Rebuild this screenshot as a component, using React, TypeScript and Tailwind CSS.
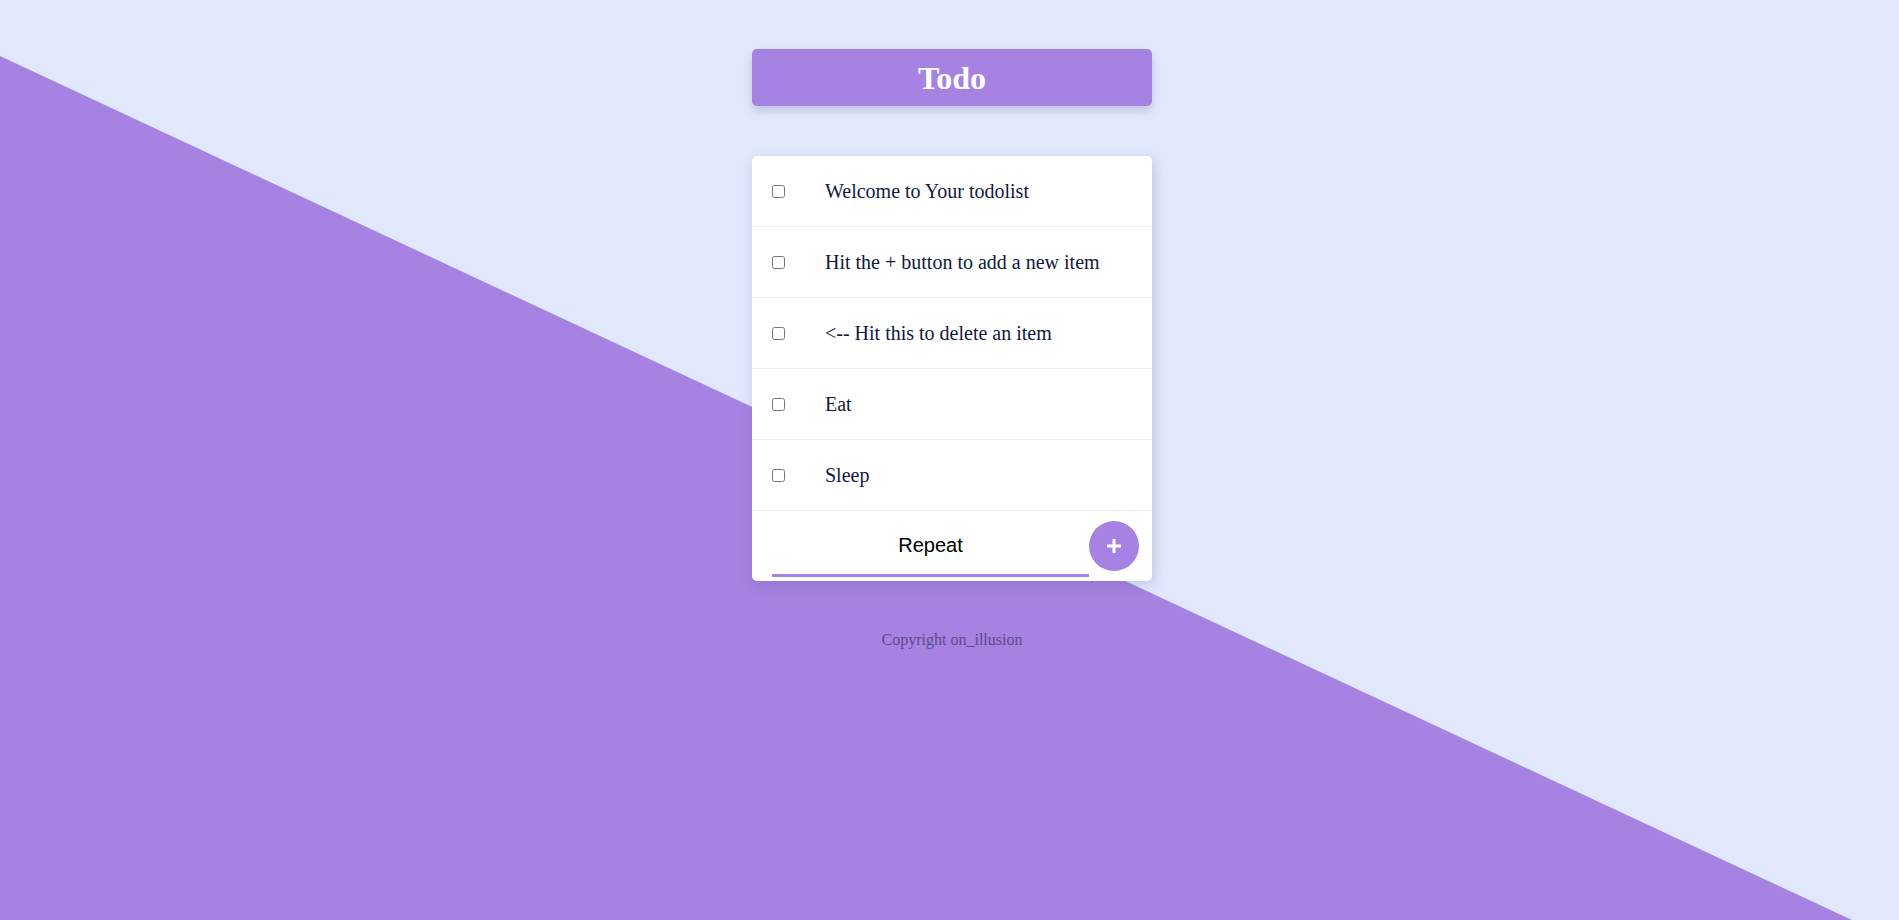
import { useState } from "react"

const items = [
  "Welcome to Your todolist",
  "Hit the + button to add a new item",
  "<-- Hit this to delete an item",
  "Eat",
  "Sleep",
]

export default function App() {
  const [value, setValue] = useState("Repeat")

  return (
    <div className="relative h-screen w-full overflow-hidden bg-[#e2e8fc] font-['Liberation_Serif',serif]">
      {/* fondo diagonal */}
      <div className="absolute inset-0 bg-[#a683e2] [clip-path:polygon(0_56px,1852px_100%,0_100%)]" />

      <div className="relative z-10 flex flex-col items-center pl-[5px] pt-[49px]">
        <div className="flex h-[57px] w-[400px] items-center justify-center rounded-[5px] bg-[#a683e2] shadow-[0_5px_10px_rgba(60,60,120,0.2)]">
          <h1 className="text-[32px] font-bold text-white">Todo</h1>
        </div>

        <div className="mt-[50px] w-[400px] rounded-[5px] bg-white shadow-[2px_4px_14px_rgba(60,60,120,0.2)]">
          {items.map((text) => (
            <div key={text} className="flex h-[71px] items-center border-b border-[#ececec] pl-5">
              <input type="checkbox" className="m-0 h-[13px] w-[13px]" />
              <p className="ml-[40px] text-[20px] text-[#0f1a3c]">{text}</p>
            </div>
          ))}

          <div className="flex h-[70px] pl-5 pr-[13px]">
            <input
              value={value}
              onChange={(e) => setValue(e.target.value)}
              className="mt-[10px] h-[56px] w-[317px] border-b-[3px] border-[#a683e2] pb-1 text-center font-['Liberation_Sans',Arial,sans-serif] text-[20px] text-black outline-none"
            />
            <button className="mt-[10px] flex h-[50px] w-[50px] items-center justify-center rounded-full bg-[#a683e2]">
              <svg width="16" height="16" viewBox="0 0 16 16">
                <path d="M8 1v14M1 8h14" stroke="white" strokeWidth="3" />
              </svg>
            </button>
          </div>
        </div>

        <p className="mt-[47px] text-[16px] text-[#5c4b88]">Copyright on_illusion</p>
      </div>
    </div>
  )
}
